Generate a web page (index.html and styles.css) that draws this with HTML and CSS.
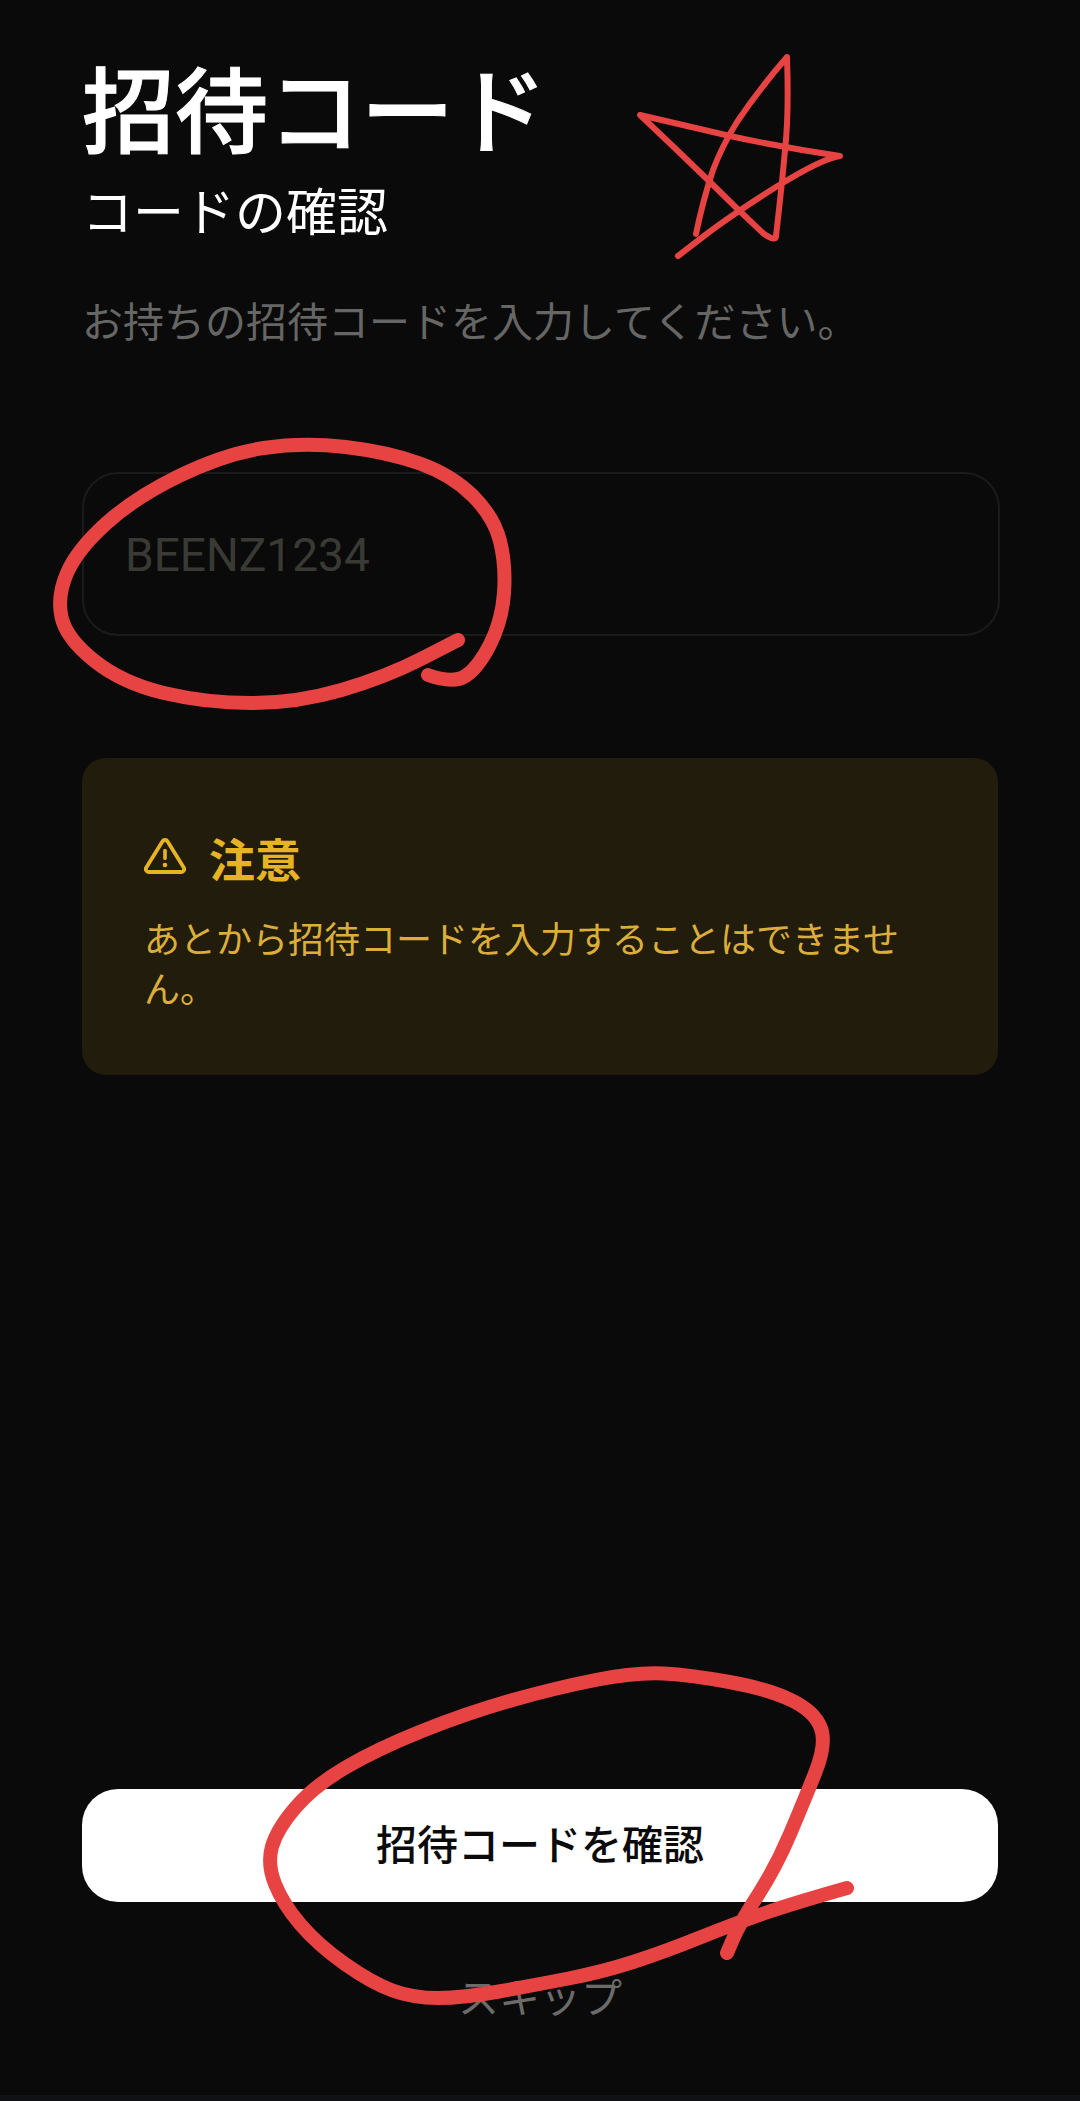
FILE: index.html
```html
<!DOCTYPE html>
<html lang="ja">
<head>
<meta charset="utf-8">
<title>招待コード</title>
<link rel="stylesheet" href="styles.css">
</head>
<body>
<main class="screen">
  <section class="content">
    <h1 class="title">招待コード</h1>
    <h2 class="subtitle">コードの確認</h2>
    <p class="desc">お持ちの招待コードを入力してください。</p>
    <div class="field"><span class="placeholder">BEENZ1234</span></div>
    <div class="notice">
      <div class="notice-head">
        <svg class="warn" viewBox="0 0 42 37" aria-hidden="true">
          <path class="warn-tri" d="M18.400 4.500 a3 3 0 0 1 5.200 0 L39.400 30 a3 3 0 0 1 -2.600 5 H5.200 a3 3 0 0 1 -2.600 -5 Z"/>
          <rect class="warn-dot" x="19.200" y="12" width="3.600" height="11" rx="1.400"/>
          <circle class="warn-dot" cx="21" cy="28" r="2.300"/>
        </svg>
        <span class="notice-title">注意</span>
      </div>
      <p class="notice-text">あとから招待コードを入力することはできません。</p>
    </div>
  </section>
  <section class="actions">
    <button class="primary">招待コードを確認</button>
    <div class="skip">スキップ</div>
  </section>
  <svg class="scribble" viewBox="0 0 1080 2101" aria-hidden="true">
    <path class="thin" d="M678 256 L704 236 Q730 216 776 187 Q823 158 840 156 Q785 148 730 136 L640 115 Q675 148 709 181 Q736 208 764 234 Q776 242 776 236 Q782 184 785 150 Q789 115 787 57 Q760 88 737 122 Q722 146 713 170 Q703 200 696 234"/>
    <path class="thick" d="M458 640 L422 658.500 Q386 677 341.500 690 Q297 703 251.500 703 Q206 703 164 693 Q122 683 94 660.500 Q66 638 61.500 617 Q57 596 67 573 Q77 550 105.500 524 Q134 498 179 476 Q224 454 263.500 448 Q303 442 345.500 447 Q388 452 420 463.500 Q452 475 473 496 Q494 517 500 541 Q506 565 504 593 Q502 621 490 644.500 Q478 668 465.500 676 Q453 684 428 675"/>
    <path class="thick" d="M727 1953 L733.500 1938 Q740 1923 758 1895 Q776 1867 790 1834 Q804 1801 815.500 1772 Q827 1743 820.500 1727 Q814 1711 791 1700 Q768 1689 729.500 1682 Q691 1675 663.500 1673.500 Q636 1672 595.500 1680 Q555 1688 511 1700.500 Q467 1713 422 1731 Q377 1749 345.500 1767.500 Q314 1786 295.500 1807.500 Q277 1829 272 1846.500 Q267 1864 275 1884 Q283 1904 300.500 1924.500 Q318 1945 345 1964 Q372 1983 392.500 1990.500 Q413 1998 438 1998 Q463 1998 499 1991.500 Q535 1985 568.500 1978.500 Q602 1972 633 1962 Q664 1952 700 1937.500 Q736 1923 765 1913 Q794 1903 847 1888"/>
  </svg>
</main>
</body>
</html>
```

FILE: styles.css
```css
* { box-sizing: border-box; }
html, body { margin: 0; padding: 0; background: #0a0a0a; }
body { font-family: "Noto Sans CJK JP", "Noto Sans", sans-serif; }
.screen {
  position: relative;
  width: 1080px;
  height: 2101px;
  padding: 0 82px;
  border-bottom: 6px solid #0f1114;
  display: flex;
  flex-direction: column;
  justify-content: space-between;
  overflow: hidden;
}
.content { padding-top: 40px; }
.title {
  margin: 0 0 1px;
  font-size: 93px;
  line-height: 132px;
  font-weight: 500;
  -webkit-text-stroke: 1px #fff;
  color: #fff;
}
.subtitle {
  margin: 0;
  font-size: 51px;
  line-height: 72px;
  font-weight: 400;
  color: #fff;
}
.desc {
  margin: 45px 0 0;
  font-size: 41px;
  line-height: 58px;
  color: #666664;
}
.field {
  margin: 124px -2px 0 0;
  height: 164px;
  border: 2px solid #1b1b1b;
  border-radius: 36px;
  padding: 0 41px;
  display: flex;
  align-items: center;
}
.placeholder {
  font-family: Roboto, sans-serif;
  font-size: 46px;
  margin-top: 2px;
  color: #3a3a35;
}
.notice {
  margin-top: 122px;
  height: 317px;
  background: #221c0c;
  border-radius: 24px;
  padding: 69px 62px 0;
}
.notice-head {
  display: flex;
  align-items: center;
  gap: 23px;
  height: 60px;
}
.warn { width: 42px; height: 37px; flex: none; margin-top: -4px; }
.warn-tri { fill: none; stroke: #e6b422; stroke-width: 3.800; stroke-linejoin: round; }
.warn-dot { fill: #e6b422; }
.notice-title {
  font-size: 46px;
  line-height: 60px;
  font-weight: 700;
  color: #e6b422;
}
.notice-text {
  margin: 25px 0 0;
  font-size: 36px;
  line-height: 50px;
  color: #dbae3a;
}
.actions { padding-bottom: 71px; }
.primary {
  display: block;
  width: 100%;
  height: 113px;
  border: 0;
  border-radius: 36px;
  background: #fff;
  color: #0a0a0a;
  font-family: inherit;
  font-size: 41px;
  font-weight: 500;
  padding: 0 0 8px;
}
.skip {
  margin-top: 64px;
  text-align: center;
  font-size: 41px;
  line-height: 58px;
  color: #6b6b69;
}
.scribble {
  position: absolute;
  left: 0;
  top: 0;
  width: 1080px;
  height: 2101px;
  pointer-events: none;
}
.thin, .thick { fill: none; stroke: #e74343; stroke-linecap: round; stroke-linejoin: round; }
.thin { stroke-width: 6; }
.thick { stroke-width: 14; }
```
